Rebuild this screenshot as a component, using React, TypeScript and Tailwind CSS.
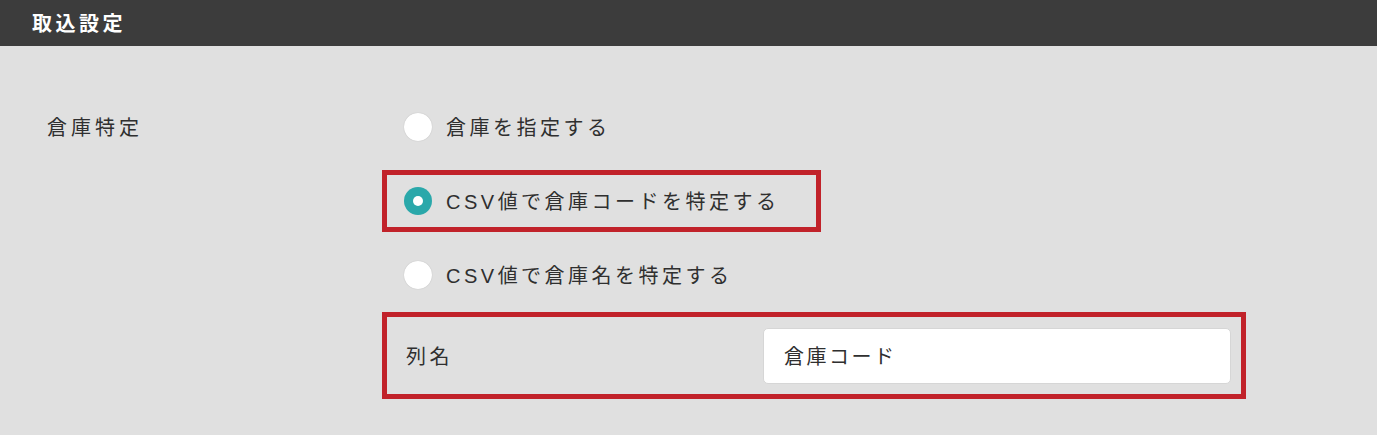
import React from 'react';

type RadioRowProps = {
  label: string;
  checked?: boolean;
  boxed?: boolean;
};

const Radio = ({ checked }: { checked?: boolean }) =>
  checked ? (
    <span className="flex h-[28px] w-[28px] shrink-0 items-center justify-center rounded-full bg-[#2aa8aa]">
      <span className="h-[10px] w-[10px] rounded-full bg-white" />
    </span>
  ) : (
    <span className="h-[28px] w-[28px] shrink-0 rounded-full bg-white shadow-[0_0_1px_rgba(0,0,0,0.25)]" />
  );

// "CSV" looks like Arial in the screenshot, a bit wider than the CJK font's latin
const withCsv = (label: string) =>
  label.startsWith('CSV') ? (
    <>
      <span className="font-['Liberation_Sans',sans-serif] tracking-[3.5px]">CSV</span>
      {label.slice(3)}
    </>
  ) : (
    label
  );

const RadioRow: React.FC<RadioRowProps> = ({ label, checked, boxed }) => (
  <div
    className={
      boxed
        ? 'flex h-[62px] w-[439px] items-center gap-[14px] border-[5px] border-[#c1222a] pl-[17px]'
        : 'flex h-[62px] items-center gap-[14px] pl-[22px]'
    }
  >
    <Radio checked={checked} />
    <span className="text-[20px] tracking-[3.5px]">{withCsv(label)}</span>
  </div>
);

export default function App() {
  return (
    <div className="min-h-screen bg-[#e0e0e0] font-['Noto_Sans_CJK_JP',sans-serif] text-[#2f2f2f]">
      <header className="flex h-[46px] items-center bg-[#3c3c3c] pl-[32px] text-[20px] font-bold tracking-[3.5px] text-white">
        取込設定
      </header>

      <div className="flex pt-[50px]">
        <div className="w-[382px] shrink-0 pl-[47px]">
          <div className="flex h-[62px] items-center text-[20px] tracking-[4px]">倉庫特定</div>
        </div>

        <div className="flex flex-col">
          <RadioRow label="倉庫を指定する" />
          <div className="mt-[12px]">
            <RadioRow label="CSV値で倉庫コードを特定する" checked boxed />
          </div>
          <div className="mt-[12px]">
            <RadioRow label="CSV値で倉庫名を特定する" />
          </div>

          <div className="mt-[6px] flex h-[87px] w-[864px] items-center border-[5px] border-[#c1222a] pl-[19px]">
            <span className="w-[357px] shrink-0 text-[20px] tracking-[3.5px]">列名</span>
            <div className="flex h-[56px] w-[468px] items-center rounded-[5px] border border-[#d6d6d6] bg-white pl-[20px] text-[20px] tracking-[2.5px]">
              倉庫コード
            </div>
          </div>
        </div>
      </div>
    </div>
  );
}
